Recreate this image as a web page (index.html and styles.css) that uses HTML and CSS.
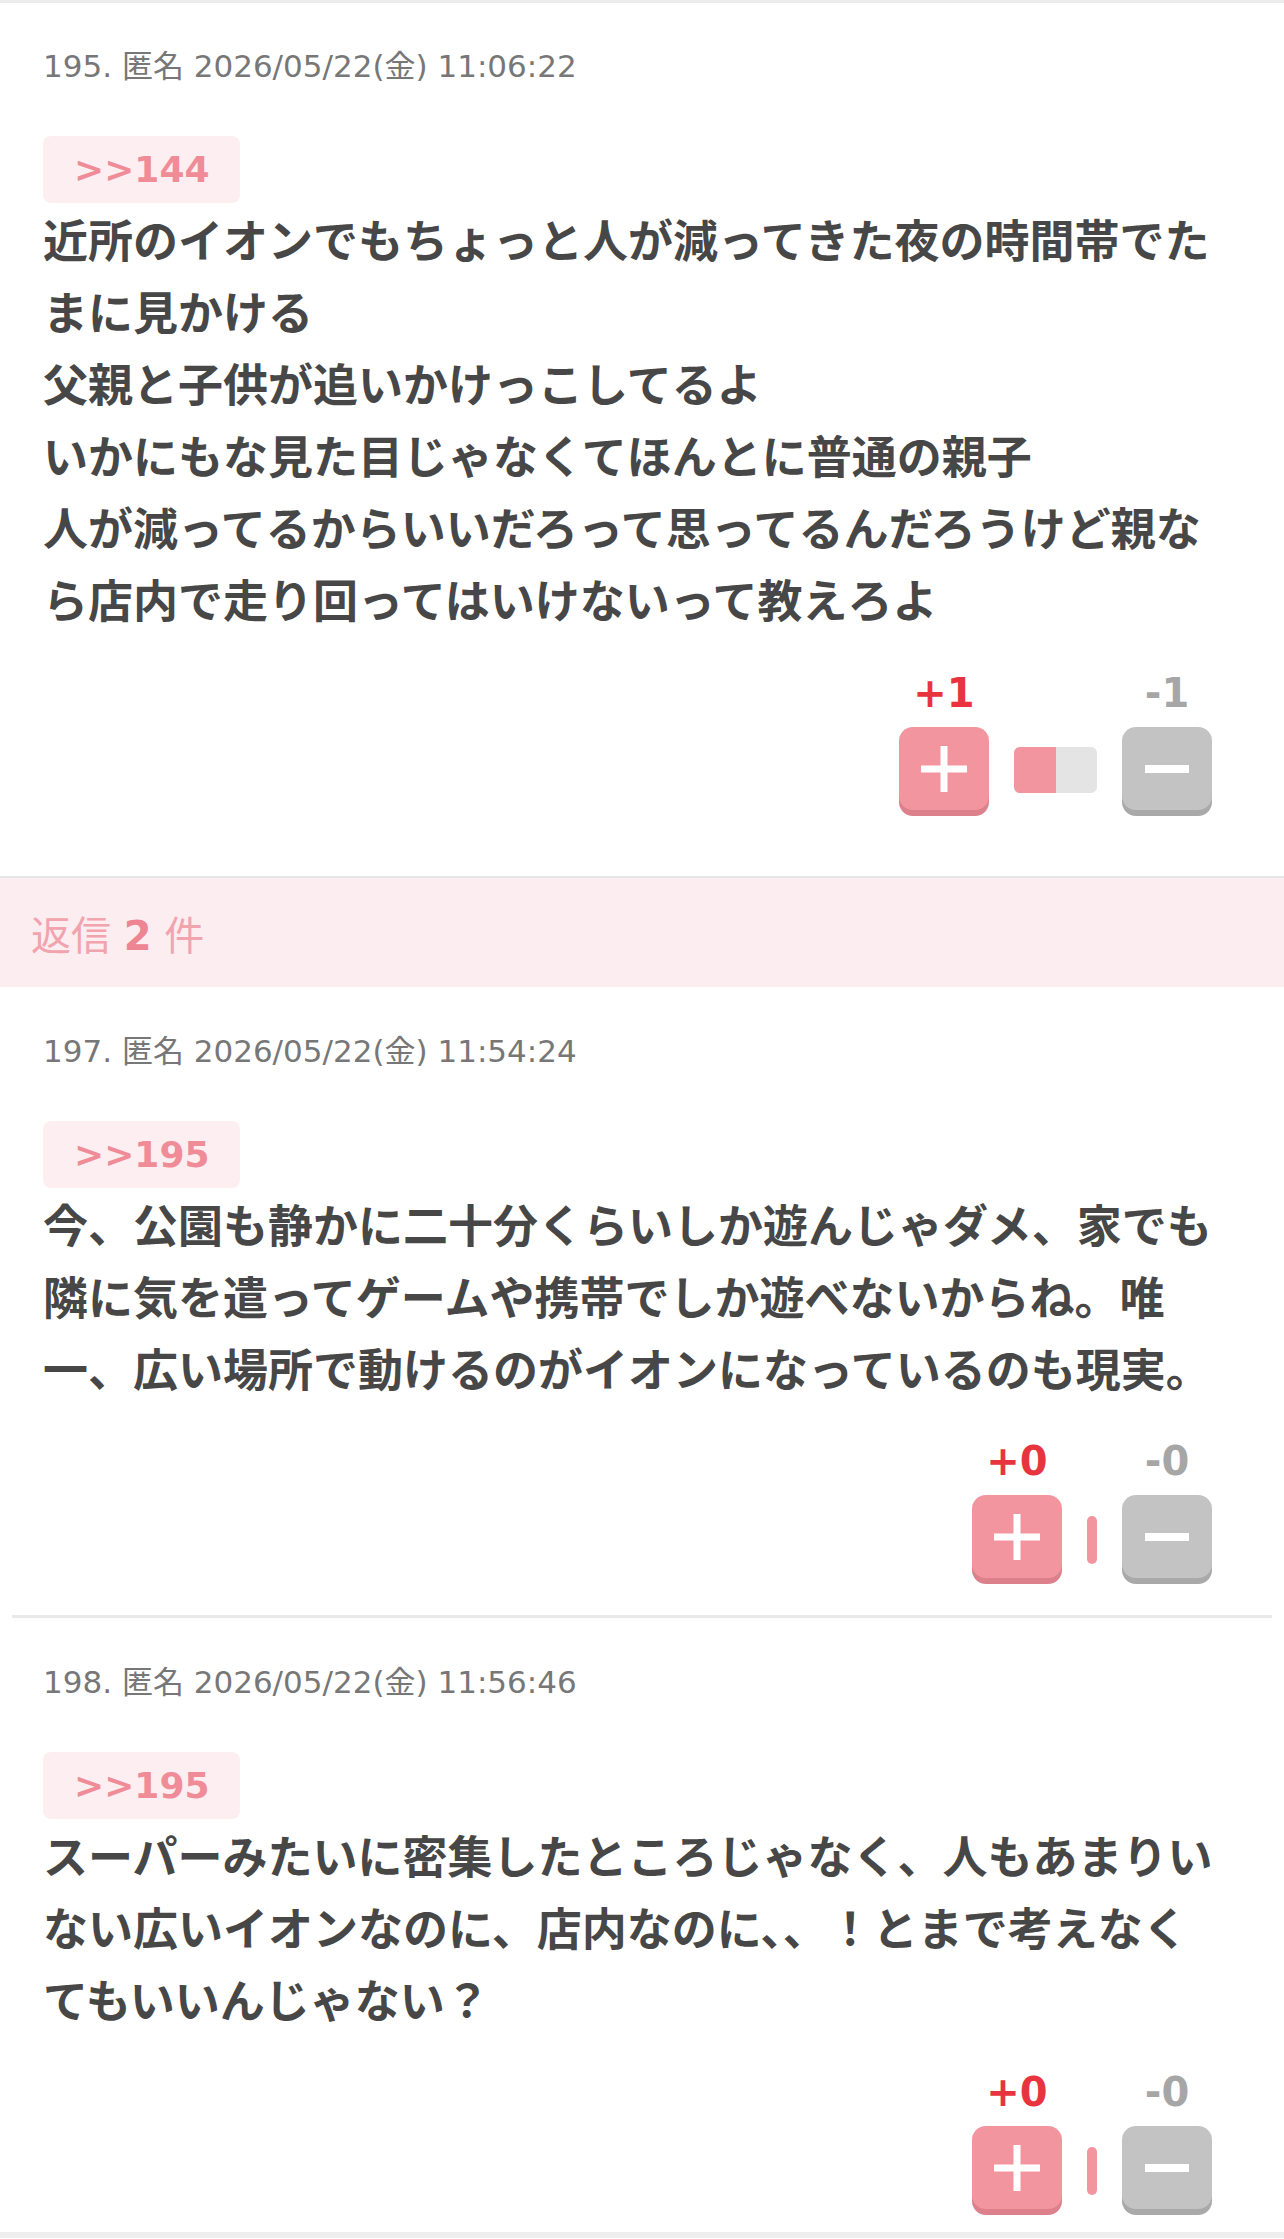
FILE: index.html
```html
<!DOCTYPE html>
<html lang="ja">
<head>
<meta charset="utf-8">
<title>コメント</title>
<link rel="stylesheet" href="styles.css">
</head>
<body>
<div class="thread">
  <article class="post post-main">
    <div class="meta">195. 匿名 2026/05/22(金) 11:06:22</div>
    <div class="anchor">&gt;&gt;144</div>
    <p class="text">近所のイオンでもちょっと人が減ってきた夜の時間帯でたまに見かける<br>父親と子供が追いかけっこしてるよ<br>いかにもな見た目じゃなくてほんとに普通の親子<br>人が減ってるからいいだろって思ってるんだろうけど親なら店内で走り回ってはいけないって教えろよ</p>
    <div class="votes">
      <div class="vote">
        <span class="count count-plus">+1</span>
        <button class="btn btn-plus" aria-label="プラス"><svg width="46" height="46" viewBox="0 0 46 46"><rect x="0" y="19.5" width="46" height="7" fill="#fff"/><rect x="19.5" y="0" width="7" height="46" fill="#fff"/></svg></button>
      </div>
      <div class="bar bar-wide"><span class="bar-good" style="width:50%"></span></div>
      <div class="vote">
        <span class="count count-minus">-1</span>
        <button class="btn btn-minus" aria-label="マイナス"><svg width="46" height="46" viewBox="0 0 46 46"><rect x="1" y="19" width="44" height="8" fill="#fff"/></svg></button>
      </div>
    </div>
  </article>

  <div class="replies-head">返信 <b>2</b> 件</div>

  <div class="replies">
    <article class="post reply">
      <div class="meta">197. 匿名 2026/05/22(金) 11:54:24</div>
      <div class="anchor">&gt;&gt;195</div>
      <p class="text">今、公園も静かに二十分くらいしか遊んじゃダメ、家でも隣に気を遣ってゲームや携帯でしか遊べないからね。唯<br>一、広い場所で動けるのがイオンになっているのも現実。</p>
      <div class="votes">
        <div class="vote">
          <span class="count count-plus">+0</span>
          <button class="btn btn-plus" aria-label="プラス"><svg width="46" height="46" viewBox="0 0 46 46"><rect x="0" y="19.5" width="46" height="7" fill="#fff"/><rect x="19.5" y="0" width="7" height="46" fill="#fff"/></svg></button>
        </div>
        <div class="bar bar-empty"></div>
        <div class="vote">
          <span class="count count-minus">-0</span>
          <button class="btn btn-minus" aria-label="マイナス"><svg width="46" height="46" viewBox="0 0 46 46"><rect x="1" y="19" width="44" height="8" fill="#fff"/></svg></button>
        </div>
      </div>
    </article>

    <article class="post reply">
      <div class="meta">198. 匿名 2026/05/22(金) 11:56:46</div>
      <div class="anchor">&gt;&gt;195</div>
      <p class="text">スーパーみたいに密集したところじゃなく、人もあまりい<br>ない広いイオンなのに、店内なのに、、！とまで考えなく<br>てもいいんじゃない？</p>
      <div class="votes">
        <div class="vote">
          <span class="count count-plus">+0</span>
          <button class="btn btn-plus" aria-label="プラス"><svg width="46" height="46" viewBox="0 0 46 46"><rect x="0" y="19.5" width="46" height="7" fill="#fff"/><rect x="19.5" y="0" width="7" height="46" fill="#fff"/></svg></button>
        </div>
        <div class="bar bar-empty"></div>
        <div class="vote">
          <span class="count count-minus">-0</span>
          <button class="btn btn-minus" aria-label="マイナス"><svg width="46" height="46" viewBox="0 0 46 46"><rect x="1" y="19" width="44" height="8" fill="#fff"/></svg></button>
        </div>
      </div>
    </article>
  </div>
</div>
</body>
</html>
```

FILE: styles.css
```css
* { box-sizing: border-box; }

body {
  margin: 0;
  background: #ffffff;
  font-family: "DejaVu Sans", "Noto Sans CJK JP", sans-serif;
}

.thread {
  border-top: 3px solid #ececec;
}

.post {
  padding: 43px 43px 60px;
}

.post-main {
  border-bottom: 2px solid #e6e6e6;
}

.meta {
  font-size: 31px;
  line-height: 40px;
  color: #777777;
}

.anchor {
  width: fit-content;
  margin-top: 50px;
  padding: 12px 31px;
  font-size: 36px;
  line-height: 43px;
  font-weight: bold;
  color: #f08c98;
  background: #fdeef1;
  border-radius: 8px;
}

.text {
  margin: 0;
  font-family: "Noto Sans CJK JP", sans-serif;
  font-size: 45px;
  line-height: 72px;
  font-weight: 700;
  color: #474747;
}

.votes {
  display: flex;
  justify-content: flex-end;
  align-items: flex-end;
  gap: 25px;
  margin: 35px 29px 0 0;
}

.vote {
  display: flex;
  flex-direction: column;
  align-items: center;
  gap: 11px;
  width: 90px;
}

.count {
  font-size: 40px;
  line-height: 46px;
  font-weight: bold;
}

.count-plus { color: #e8343f; }
.count-minus { color: #a6a6a6; }

.btn {
  display: flex;
  align-items: center;
  justify-content: center;
  width: 90px;
  height: 83px;
  margin-bottom: 6px;
  padding: 0;
  border: none;
  border-radius: 14px;
}

.btn svg { display: block; }

.btn-plus {
  background: #f3959f;
  box-shadow: 0 6px 0 #dc818b;
}

.btn-minus {
  background: #c3c3c3;
  box-shadow: 0 6px 0 #a9a9a9;
}

.bar {
  display: flex;
  height: 46px;
  margin-bottom: 23px;
  border-radius: 6px;
  overflow: hidden;
}

.bar-wide {
  width: 83px;
  background: #e4e4e4;
}

.bar-good {
  display: block;
  height: 100%;
  background: #f3959f;
}

.bar-empty {
  width: 10px;
  height: 48px;
  margin-bottom: 20px;
  border-radius: 5px;
  background: #f3959f;
}

.replies-head {
  height: 109px;
  padding-top: 8px;
  padding-left: 31px;
  font-size: 40px;
  line-height: 101px;
  color: #f2a4ae;
  background: #fcedf1;
}

.replies-head b {
  color: #ee8592;
}

.replies {
  padding: 0 12px;
  border-bottom: 6px solid #eeeeee;
}

.reply {
  padding: 44px 31px 31px;
  border-bottom: 3px solid #e9e9e9;
}

.reply .votes {
  margin-top: 34px;
}

.reply:last-child {
  border-bottom: none;
  padding-bottom: 17px;
}
```
